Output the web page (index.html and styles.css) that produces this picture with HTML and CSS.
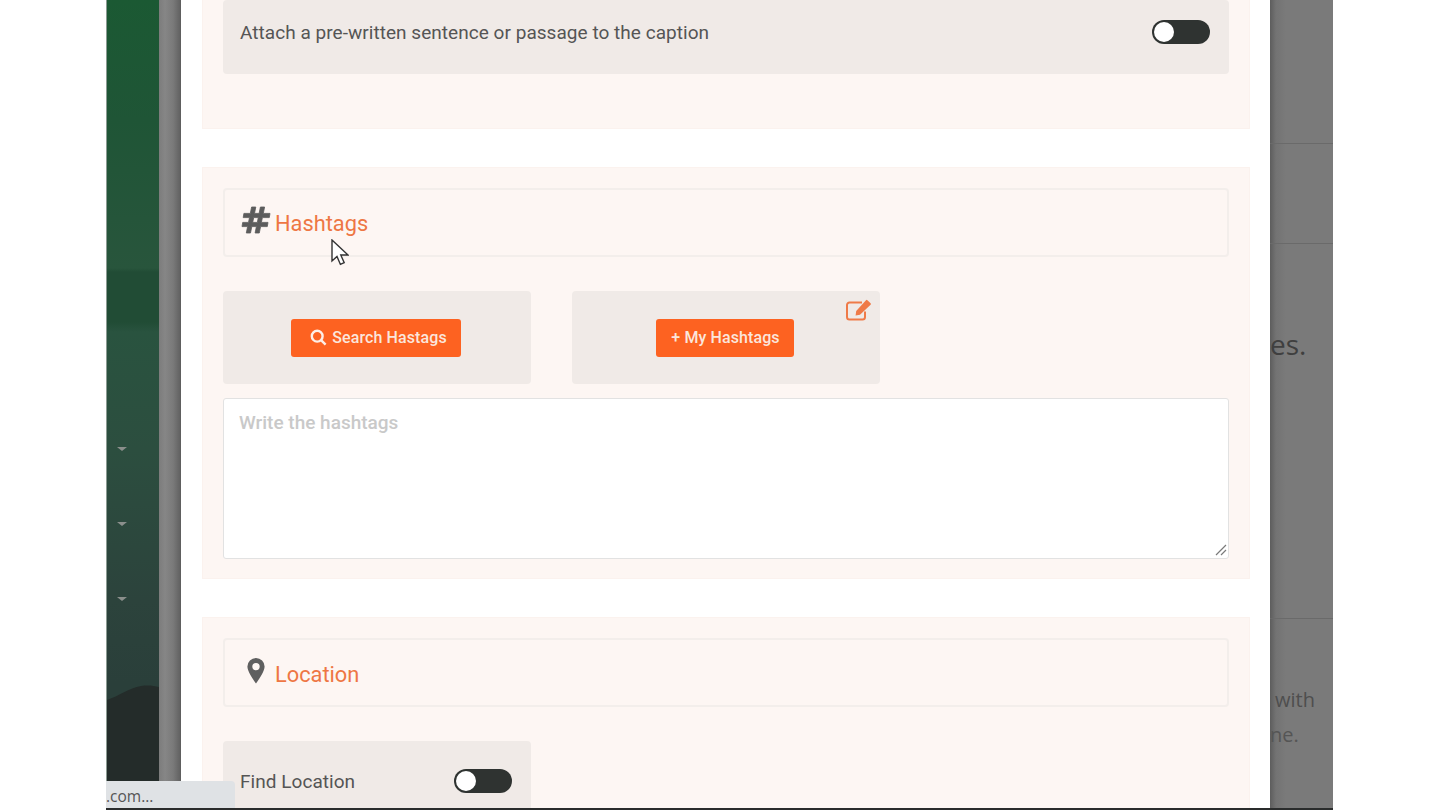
FILE: index.html
```html
<!DOCTYPE html>
<html lang="en">
<head>
<meta charset="utf-8">
<title>Post composer</title>
<link rel="stylesheet" href="styles.css">
</head>
<body>
<div class="app">
  <aside class="sidebar">
    <div class="carets">
      <span class="caret"></span>
      <span class="caret"></span>
      <span class="caret"></span>
    </div>
    <svg class="hill" viewBox="0 0 52 126" preserveAspectRatio="none"><path d="M0 18C12 14 22 6 34 4c8-1 13 0 18 1v121H0z"/></svg>
  </aside>
  <div class="gutter"></div>
  <main class="modal">
    <section class="section section-first">
      <div class="tile tile-wide">
        <span class="tile-label">Attach a pre-written sentence or passage to the caption</span>
        <span class="toggle"><span class="knob"></span></span>
      </div>
    </section>
    <section class="section section-hashtags">
      <div class="heading">
        <svg class="icon-hash" viewBox="0 0 30 28"><path d="M10.600 1h4.200l-1.300 6.400h4.600L19.400 1h4.200l-1.300 6.400H29l-.7 4.200h-6.900l-1 4.800H27l-.7 4.200h-6.700L18.300 27h-4.200l1.300-6.400h-4.600L9.500 27H5.300l1.300-6.400H1l.7-4.200h5.800l1-4.800H2.200l.7-4.200h6.400zM12.700 11.600l-1 4.800h4.600l1-4.800z"/></svg>
        <span class="heading-text">Hashtags</span>
      </div>
      <div class="tile-row">
        <div class="tile tile-action">
          <button class="btn btn-search" type="button">
            <svg class="icon-search" viewBox="0 0 17 17"><circle cx="7.200" cy="7.200" r="5.400"/><path d="M11.300 11.300l4.300 4.300"/></svg>
            Search Hastags
          </button>
        </div>
        <div class="tile tile-action">
          <button class="btn" type="button">+ My Hashtags</button>
          <svg class="icon-edit" viewBox="0 0 26 22"><path class="edit-box" d="M19 12.500V18a2.500 2.500 0 0 1-2.500 2.500h-13A2.500 2.500 0 0 1 1 18V6a2.500 2.500 0 0 1 2.500-2.500H16"/><path class="edit-pen" d="M21.400 1.200l3.200 3.100a1 1 0 0 1 0 1.400L14 15.800l-4.400.7.600-4.400L20 1.200a1 1 0 0 1 1.400 0z"/></svg>
        </div>
      </div>
      <div class="field-wrap">
        <textarea class="field" placeholder="Write the hashtags"></textarea>
        <svg class="grip" viewBox="0 0 12 12"><path d="M1 11L11 1M6 11l5-5"/></svg>
      </div>
    </section>
    <section class="section section-location">
      <div class="heading heading-location">
        <svg class="icon-pin" viewBox="0 0 18 26"><path fill-rule="evenodd" d="M9 0a8.600 8.600 0 0 1 8.600 8.600c0 4.300-4.900 11.800-8.600 17C5.300 20.400.4 12.900.4 8.600A8.600 8.600 0 0 1 9 0zm0 4.900a3.700 3.700 0 1 0 0 7.400 3.700 3.700 0 0 0 0-7.400z"/></svg>
        <span class="heading-text">Location</span>
      </div>
      <div class="tile-row">
        <div class="tile tile-find">
          <span class="tile-label">Find Location</span>
          <span class="toggle"><span class="knob"></span></span>
        </div>
      </div>
    </section>
  </main>
  <div class="backdrop">
    <div class="backdrop-row row-a"></div>
    <div class="backdrop-row row-b"><span class="peek peek-large">es.</span></div>
    <div class="backdrop-row row-c">
      <span class="peek peek-with">with</span>
      <span class="peek peek-me">ne.</span>
    </div>
  </div>
</div>
<div class="status">.com...</div>
<svg class="cursor" viewBox="0 0 18 27"><path d="M1 1v21l5-4.600 3.400 8 3.800-1.700-3.400-7.700H17z"/></svg>
</body>
</html>
```
FILE: styles.css
```css
* { box-sizing: border-box; }
html, body { margin: 0; height: 100%; overflow: hidden; background: #fff; }
body { font-family: Roboto, "Liberation Sans", sans-serif; position: relative; }

.app {
  display: flex;
  width: 1227px;
  height: 810px;
  margin-left: 106px;
  overflow: hidden;
  border-bottom: 2px solid #2a2c2c;
}

.sidebar {
  display: flex;
  flex-direction: column;
  flex: 0 0 53px;
  border-left: 1px solid #8b9a92;
  background: linear-gradient(180deg, #1b5933 0, #1f5536 120px, #28553c 268px, #214c35 272px, #214c35 322px, #29533f 332px, #2c4e3f 450px, #2c433c 600px, #2a3f3a 682px, #2a3f3a 808px);
}
.carets {
  display: flex;
  flex-direction: column;
  gap: 71px;
  padding: 447px 0 0 10px;
}
.caret {
  width: 0;
  height: 0;
  border-left: 5px solid transparent;
  border-right: 5px solid transparent;
  border-top: 4px solid #8b8f8c;
}
.hill { display: block; margin-top: auto; width: 100%; height: 126px; fill: #242c2a; }

.gutter {
  flex: 0 0 22px;
  background: linear-gradient(90deg, #7c7c7c 0, #868686 6px, #7a7a7a 14px, #626262 21px, #5a5a5a 22px);
}

.modal {
  display: flex;
  flex-direction: column;
  gap: 38px;
  flex: 0 0 1089px;
  padding: 0 20px 0 21px;
  background: #fff;
}

.section {
  flex: none;
  padding: 20px;
  background: #fdf6f3;
  border: 1px solid #fbf2ee;
}
.section-first { height: 129px; padding-top: 0; border-top: 0; }
.section-hashtags { height: 412px; }
.section-location { height: 260px; }

.tile { background: #f0eae7; border-radius: 4px; }
.tile-wide {
  display: flex;
  align-items: center;
  justify-content: space-between;
  height: 74px;
  padding: 0 19px 10px 17px;
}
.tile-label { font-size: 19px; color: #555; letter-spacing: .04px; }

.toggle {
  display: flex;
  align-items: center;
  width: 58px;
  height: 24px;
  padding: 0 2px;
  border-radius: 12px;
  background: #2f3331;
}
.knob { width: 20px; height: 20px; border-radius: 50%; background: #fff; }

.heading {
  display: flex;
  align-items: center;
  height: 69px;
  padding: 0 16px;
  border: 2px solid #f3eeeb;
  border-radius: 4px;
}
.heading-location { padding-top: 2px; }
.heading-text { font-size: 21.800px; color: #ee7644; margin-left: 4px; position: relative; top: 1px; }
.icon-hash { width: 30px; height: 28px; fill: #5c5c5c; stroke: #5c5c5c; stroke-width: .8; margin-top: -5px; }
.icon-pin { width: 18px; height: 26px; fill: #5f5f5f; margin: -5px 6px 0 6px; }

.tile-row { display: flex; gap: 41px; margin-top: 34px; }
.tile-action {
  position: relative;
  display: flex;
  align-items: center;
  justify-content: center;
  width: 308px;
  height: 93px;
  padding-right: 2px;
}
.tile-find {
  display: flex;
  align-items: center;
  justify-content: space-between;
  width: 308px;
  height: 80px;
  padding: 0 19px 0 17px;
}

.btn {
  display: flex;
  align-items: center;
  gap: 5px;
  height: 38px;
  padding: 0 14px 0 15px;
  border: 0;
  border-radius: 3px;
  background: #fd6221;
  color: #fbe6dc;
  font: 500 16px Roboto, sans-serif;
  letter-spacing: .1px;
}
.btn-search { padding-left: 19px; }
.icon-search { width: 17px; height: 17px; fill: none; stroke: #fdeee7; stroke-width: 2.400; }
.icon-edit { position: absolute; top: 8px; right: 8px; width: 26px; height: 22px; }
.edit-box { fill: none; stroke: #ef7a48; stroke-width: 2; }
.edit-pen { fill: #ef7a48; }

.field-wrap { position: relative; margin-top: 14px; }
.field {
  display: block;
  width: 100%;
  height: 161px;
  padding: 12px 15px;
  border: 1px solid #e2e2e2;
  border-radius: 3px;
  background: #fff;
  font: 500 19px Roboto, sans-serif;
  outline: 0;
  resize: none;
}
.field::placeholder { color: #c9c9c9; opacity: 1; }
.grip {
  position: absolute;
  right: 2px;
  bottom: 3px;
  width: 12px;
  height: 12px;
  fill: none;
  stroke: #7a7a7a;
  stroke-width: 1.200;
}

.backdrop {
  display: flex;
  flex-direction: column;
  flex: 1;
  overflow: hidden;
  padding-top: 143px;
  background: linear-gradient(90deg, #5d5d5d 0, #737373 6px, #7a7a7a 16px, #7a7a7a 100%);
}
.backdrop-row { border-top: 1px solid #6a6a6a; }
.row-a { height: 100px; }
.row-b { height: 375px; padding-top: 80px; }
.row-c { flex: 1; display: flex; flex-direction: column; padding-top: 67px; }
.peek { display: block; color: #3f3f3f; white-space: nowrap; }
.peek-large { font: 400 28px "Open Sans", sans-serif; line-height: 40px; }
.peek-with { font: 400 20px "Open Sans", sans-serif; line-height: 28px; padding-left: 5px; color: #4e4e4e; }
.peek-me { font: 400 20px "Open Sans", sans-serif; line-height: 28px; margin-top: 7px; color: #555; }

.status {
  position: absolute;
  left: 106px;
  bottom: 2px;
  width: 129px;
  height: 27px;
  padding-top: 6px;
  background: #dfe2e5;
  border-top-right-radius: 4px;
  color: #555;
  font: 400 15.500px "Open Sans", sans-serif;
  line-height: 18px;
}

.cursor {
  position: absolute;
  left: 331px;
  top: 239px;
  width: 18px;
  height: 27px;
  fill: #fff;
  stroke: #333;
  stroke-width: 1.400;
}
```
